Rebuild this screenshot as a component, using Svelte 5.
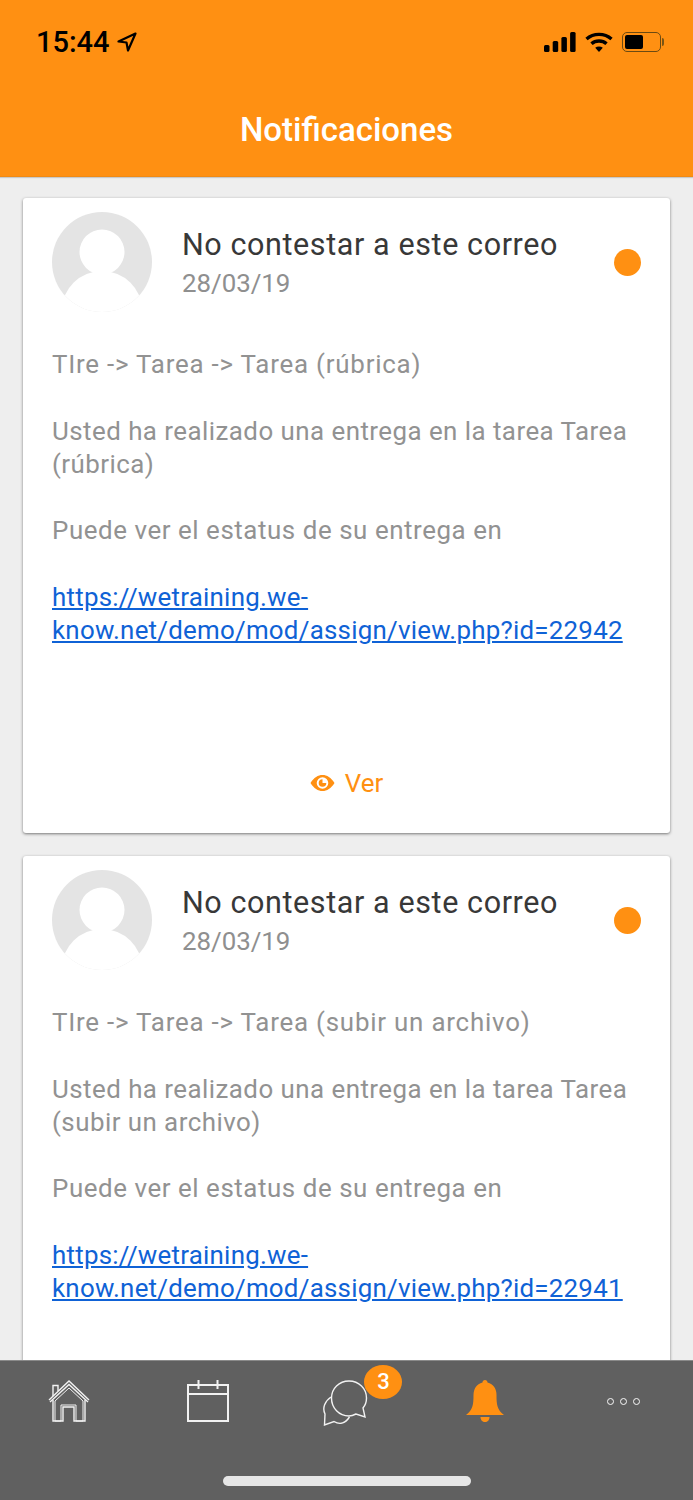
<script lang="ts">
	const notifications = [
		{
			course: 'TIre -> Tarea -> Tarea (rúbrica)',
			task: 'Usted ha realizado una entrega en la tarea Tarea (rúbrica)',
			id: 22942
		},
		{
			course: 'TIre -> Tarea -> Tarea (subir un archivo)',
			task: 'Usted ha realizado una entrega en la tarea Tarea (subir un archivo)',
			id: 22941
		}
	];
</script>

<div class="screen">
	<header class="header">
		<div class="status">
			<div class="time">
				<span>15:44</span>
				<svg width="20" height="20" viewBox="0 0 20 20"><path d="M18.5 1.5 L1.5 9.5 L9.5 10.5 L11 18.5 Z" fill="none" stroke="#000" stroke-width="2.2" stroke-linejoin="round" /></svg>
			</div>
			<div class="status-icons">
				<svg class="signal" width="32" height="20" viewBox="0 0 32 20" fill="#000">
					<rect x="0" y="13" width="5.5" height="7" rx="1.5" />
					<rect x="8.7" y="9" width="5.5" height="11" rx="1.5" />
					<rect x="17.4" y="5" width="5.5" height="15" rx="1.5" />
					<rect x="26.1" y="0" width="5.5" height="20" rx="1.5" />
				</svg>
				<svg class="wifi" width="28" height="20" viewBox="0 0 28 20" fill="none" stroke="#000" stroke-width="3.4">
					<path d="M1.5 7 C8.5 0.8 19.5 0.8 26.5 7" />
					<path d="M6.5 11.7 C10.5 8 17.5 8 21.5 11.7" />
					<path d="M14 20 L10.2 15.7 C12.2 14.2 15.8 14.2 17.8 15.7 Z" fill="#000" stroke="none" />
				</svg>
				<div class="battery"><div class="battery-level"></div></div>
				<div class="battery-tip"></div>
			</div>
		</div>
		<h1>Notificaciones</h1>
	</header>

	<main class="list">
		{#each notifications as item}
			<article class="card">
				<div class="card-head">
					<svg class="avatar" viewBox="0 0 100 100">
						<defs>
							<clipPath id="avatar-clip"><circle cx="50" cy="50" r="50" /></clipPath>
						</defs>
						<circle cx="50" cy="50" r="50" fill="#e4e4e4" />
						<g clip-path="url(#avatar-clip)" fill="#fff">
							<circle cx="50" cy="40" r="22.5" />
							<ellipse cx="50" cy="98" rx="40" ry="39" />
						</g>
					</svg>
					<div class="head-text">
						<div class="title">No contestar a este correo</div>
						<div class="date">28/03/19</div>
					</div>
					<span class="dot"></span>
				</div>
				<div class="body">
					<p class="course">{item.course}</p>
					<p class="task">{item.task}</p>
					<p class="hint">Puede ver el estatus de su entrega en</p>
					<p>
						<a href="https://wetraining.we-know.net/demo/mod/assign/view.php?id={item.id}">https://wetraining.we-know.net/demo/mod/assign/view.php?id={item.id}</a>
					</p>
				</div>
				<div class="card-action">
					<svg width="25" height="18" viewBox="0 0 25 18">
						<path d="M0.5 9 C4 3.5 8 1 12.5 1 C17 1 21 3.5 24.5 9 C21 14.5 17 17 12.5 17 C8 17 4 14.5 0.5 9 Z M12.5 3.2 A5.8 5.8 0 1 0 12.5 14.8 A5.8 5.8 0 1 0 12.5 3.2 Z" fill="#ff9012" fill-rule="evenodd" />
						<path d="M12.5 5.2 A3.8 3.8 0 1 0 16.3 9 L12.5 9 Z" fill="#ff9012" />
					</svg>
					<span>Ver</span>
				</div>
			</article>
		{/each}
	</main>

	<nav class="tabbar">
		<div class="tabs">
			<div class="tab">
				<svg width="42" height="44" viewBox="0 0 42 44" fill="none" stroke="#f2f2f2" stroke-width="1.4">
					<path d="M1 20 L21 1 L41 20" />
					<path d="M2 22 L21 4.5 L40 22" />
					<path d="M5 20 V41 H15 V27 H26 V41 H37 V20" />
					<path d="M7 41 V21 L21 8 L35 21 V41 H28 V25 H13 V41 Z" stroke-width="1" />
					<path d="M5 16 V5.5 H10 V11" />
				</svg>
			</div>
			<div class="tab">
				<svg width="44" height="42" viewBox="0 0 44 42" fill="none" stroke="#f2f2f2" stroke-width="2">
					<rect x="2" y="5" width="40" height="36" />
					<path d="M2 14 H42" />
					<path d="M12.5 0 V9 M31.5 0 V9" />
				</svg>
			</div>
			<div class="tab">
				<div class="chat">
					<svg width="48" height="46" viewBox="0 0 48 46" fill="none" stroke="#f2f2f2" stroke-width="1.4">
						<path d="M9 17 C3 21 0 28 3 34 L2.5 45 L12 41.5 C17 44.5 23 44 27.5 37" />
						<path d="M27 1 C17 1 9.5 8.5 9.5 18 C9.5 28 17 36 27 36 C30 36 32 35 34 34 L43 37 L41 28 C43.5 25 44.5 22 44.5 18 C44.5 8.5 37 1 27 1 Z" />
					</svg>
					<span class="badge">3</span>
				</div>
			</div>
			<div class="tab">
				<svg width="38" height="42" viewBox="0 0 38 42" fill="#ff9012">
					<path d="M19 0 C20.5 0 21.5 1 21.5 2.5 C27.5 4 30.5 9 30.5 15 C30.5 24 31 30 38 35 H0 C7 30 7.5 24 7.5 15 C7.5 9 10.5 4 16.5 2.5 C16.5 1 17.5 0 19 0 Z" />
					<path d="M14.5 37 H23.5 C23.5 40 21.5 42 19 42 C16.5 42 14.5 40 14.5 37 Z" />
				</svg>
			</div>
			<div class="tab">
				<div class="more"><i></i><i></i><i></i></div>
			</div>
		</div>
		<div class="home-bar"></div>
	</nav>
</div>

<style>
	:global(body) {
		margin: 0;
	}

	.screen {
		display: flex;
		flex-direction: column;
		width: 693px;
		height: 1500px;
		overflow: hidden;
		background: #eeeeee;
		font-family: Roboto, 'Liberation Sans', sans-serif;
	}

	.header {
		flex-shrink: 0;
		height: 177px;
		box-sizing: border-box;
		background: #ff9012;
		border-bottom: 1px solid #f08a14;
		box-shadow: 0 1px 1px #c9c9c9;
		z-index: 1;
	}

	.status {
		display: flex;
		justify-content: space-between;
		align-items: center;
		height: 28px;
		padding: 28px 29px 0 36px;
	}

	.time {
		display: flex;
		align-items: center;
		gap: 7px;
		font-size: 29px;
		font-weight: 500;
		color: #000;
	}

	.status-icons {
		display: flex;
		align-items: center;
	}

	.signal {
		margin-right: 9px;
	}

	.wifi {
		margin-right: 9px;
	}

	.battery {
		width: 33px;
		height: 14px;
		padding: 2px;
		border: 1.5px solid #6b4a12;
		border-radius: 5px;
	}

	.battery-level {
		width: 18px;
		height: 14px;
		background: #000;
		border-radius: 2px;
	}

	.battery-tip {
		width: 2px;
		height: 8px;
		margin-left: 1px;
		background: #7a5514;
		border-radius: 0 2px 2px 0;
	}

	h1 {
		margin: 53px 0 0;
		text-align: center;
		font-size: 33px;
		line-height: 42px;
		font-weight: 500;
		color: #fff;
	}

	.list {
		flex: 1;
		min-height: 0;
		overflow: hidden;
		padding: 21px 23px 0;
	}

	.card {
		height: 635px;
		box-sizing: border-box;
		margin-bottom: 23px;
		padding: 14px 29px 0;
		display: flex;
		flex-direction: column;
		background: #fff;
		border-radius: 3px;
		box-shadow: 0 1px 3px rgba(0, 0, 0, 0.5);
	}

	.card-head {
		display: flex;
		align-items: center;
	}

	.avatar {
		width: 100px;
		height: 100px;
		flex-shrink: 0;
	}

	.head-text {
		flex: 1;
		margin-left: 30px;
		padding-top: 4px;
	}

	.title {
		font-size: 30.5px;
		line-height: 38px;
		letter-spacing: 0.6px;
		color: #383838;
	}

	.date {
		font-size: 25.9px;
		line-height: 38px;
		letter-spacing: -0.05px;
		color: #8f8f8f;
	}

	.dot {
		width: 27px;
		height: 27px;
		border-radius: 50%;
		background: #ff9012;
	}

	.body {
		flex: 1;
		margin-top: 36px;
		font-size: 25.9px;
		line-height: 33.3px;
		color: #929292;
	}

	.body p {
		margin: 0 0 33.3px;
	}

	.body .course {
		letter-spacing: 0.78px;
	}

	.body .task {
		letter-spacing: 0.46px;
	}

	.body .hint {
		letter-spacing: 0.56px;
	}

	.body a {
		letter-spacing: 0.24px;
		color: #0f62d6;
		text-decoration: underline;
	}

	.card-action {
		display: flex;
		justify-content: center;
		align-items: center;
		gap: 10px;
		height: 33px;
		margin-bottom: 34px;
		font-size: 25.9px;
		color: #ff9012;
	}

	.tabbar {
		flex-shrink: 0;
		height: 140px;
		box-sizing: border-box;
		background: #606060;
		border-top: 1px solid #8a8a8a;
		position: relative;
	}

	.tabs {
		display: grid;
		grid-template-columns: repeat(5, 1fr);
		width: 693px;
		height: 84px;
		padding-top: 19px;
		box-sizing: border-box;
	}

	.tab {
		display: flex;
		justify-content: center;
		align-items: flex-start;
		height: 46px;
	}

	.chat {
		position: relative;
		width: 48px;
		height: 46px;
	}

	.badge {
		position: absolute;
		top: -15px;
		left: 42px;
		width: 38px;
		height: 34px;
		border-radius: 50%;
		background: #ff9012;
		color: #fff;
		font-size: 22px;
		font-weight: 500;
		line-height: 34px;
		text-align: center;
	}

	.more {
		display: flex;
		gap: 6px;
		margin-top: 18px;
	}

	.more i {
		width: 5px;
		height: 5px;
		border: 1.5px solid #f8f8f8;
		border-radius: 50%;
	}

	.home-bar {
		width: 248px;
		height: 10px;
		margin: 31px auto 0;
		background: #e6e6e6;
		border-radius: 5px;
	}
</style>
